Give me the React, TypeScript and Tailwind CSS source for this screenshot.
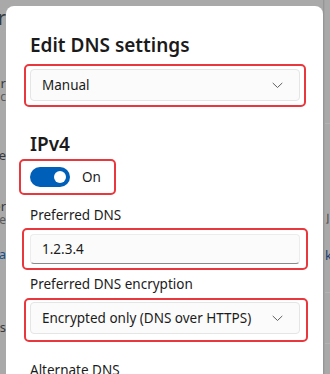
import { ReactNode } from 'react'

const FONT = { fontFamily: '"Segoe UI", "Noto Sans", "Open Sans", sans-serif' }

function Chevron() {
  return (
    <svg width="11" height="7" viewBox="0 0 11 7" fill="none" className="shrink-0">
      <path d="M1 1.2 L5.5 5.5 L10 1.2" stroke="#5f5f5f" strokeWidth="1" strokeLinecap="round" strokeLinejoin="round" />
    </svg>
  )
}

// red annotation frame drawn over a control
function Marked({ children, className }: { children: ReactNode; className: string }) {
  return (
    <div className="relative">
      {children}
      <div className={`pointer-events-none absolute rounded-[5px] border-2 border-[#e8383d] ${className}`} />
    </div>
  )
}

function Combo({ value }: { value: string }) {
  return (
    <div className="flex h-[32px] items-center justify-between rounded-[4px] border border-[#e5e5e5] bg-[#fbfbfb] pl-[11px] pr-[16px] text-[13.5px] text-[#1b1b1b]">
      <span>{value}</span>
      <Chevron />
    </div>
  )
}

function LeftStrip() {
  return (
    <div className="flex w-[6px] shrink-0 flex-col items-end overflow-hidden bg-[#a9a9a9] text-[#3a3a3a] leading-none">
      <div className="mt-[8px] h-[14px] whitespace-nowrap text-[20px]">Hardwar</div>
      <div className="mt-[35px] h-px w-full bg-[#b6b6b6]" />
      <div className="mt-[20px] whitespace-nowrap text-[13px]">Hardwar</div>
      <div className="mt-[1px] whitespace-nowrap text-[12px] text-[#5a5a5a]">Manual c</div>
      <div className="mt-[16px] h-px w-full bg-[#b6b6b6]" />
      <div className="mt-[30px] whitespace-nowrap text-[13px]">Valiue</div>
      <div className="mt-[38px] whitespace-nowrap text-[13px]">Ownwer</div>
      <div className="mt-[1px] whitespace-nowrap text-[12px] text-[#5a5a5a]">Type</div>
      <div className="mt-[22px] whitespace-nowrap text-[13px] text-[#1a4f8a]">Da</div>
      <div className="mt-[40px] h-px w-full bg-[#b6b6b6]" />
      <div className="mt-[20px] whitespace-nowrap text-[13px]">Hiss</div>
      <div className="mt-[20px] h-px w-full bg-[#b6b6b6]" />
      <div className="mt-[20px] whitespace-nowrap text-[13px]">Hiss</div>
    </div>
  )
}

function RightStrip() {
  return (
    <div className="flex flex-1 border-l border-[#969696] bg-[#a9a9a9]">
      <div className="w-px bg-[#a2a2a2]" />
      <div className="flex flex-1 flex-col leading-none">
        <div className="mt-[123px] h-px w-full bg-[#b3b3b3]" />
        <div className="mt-[88px] text-[11px] text-[#444]">⌋</div>
        <div className="mt-[26px] text-[13px] text-[#1a3f6e]">k</div>
        <div className="mt-[30px] h-px w-full bg-[#b3b3b3]" />
        <div className="mt-[50px] h-px w-full bg-[#b3b3b3]" />
      </div>
    </div>
  )
}

export default function App() {
  return (
    <div className="flex h-[374px] w-[330px] overflow-hidden bg-[#a9a9a9]" style={FONT}>
      <LeftStrip />
      <div className="mt-[6px] w-[317px] shrink-0 rounded-t-[8px] bg-white pl-[24px] pr-[23px] text-[#1b1b1b]">
        <h1 className="mt-[25px] text-[19px] font-semibold leading-[28px]">Edit DNS settings</h1>

        <div className="mt-[10px]">
          <Marked className="-left-[6px] -right-[6px] -top-[5px] -bottom-[6px]">
            <Combo value="Manual" />
          </Marked>
        </div>

        <h2 className="mt-[29px] text-[19px] font-semibold leading-[28px]">IPv4</h2>

        <div className="mt-[1px] -ml-[11px] flex h-[36px] w-[97px] items-center rounded-[5px] border-2 border-[#e8383d] pl-[9px]">
          <div className="flex h-[20px] w-[40px] items-center justify-end rounded-full bg-[#005fb8] pr-[4px]">
            <div className="h-[12px] w-[12px] rounded-full bg-white" />
          </div>
          <span className="ml-[12px] text-[13.5px]">On</span>
        </div>

        <div className="mt-[10px] text-[13.5px] leading-[20px]">Preferred DNS</div>

        <div className="mt-[9px]">
          <Marked className="-left-[8px] -right-[8px] -top-[6px] -bottom-[6px]">
            <div className="flex h-[30px] items-center rounded-[4px] border border-[#ececec] border-b-[#8a8a8a] bg-[#fbfbfb] pl-[11px] text-[13.5px]">
              1.2.3.4
            </div>
          </Marked>
        </div>

        <div className="mt-[10px] text-[13.5px] leading-[20px]">Preferred DNS encryption</div>

        <div className="mt-[8px]">
          <Marked className="-left-[6px] -right-[8px] -top-[4px] -bottom-[8px]">
            <Combo value="Encrypted only (DNS over HTTPS)" />
          </Marked>
        </div>

        <div className="mt-[26px] text-[13.5px] leading-[20px]">Alternate DNS</div>
      </div>
      <RightStrip />
    </div>
  )
}
